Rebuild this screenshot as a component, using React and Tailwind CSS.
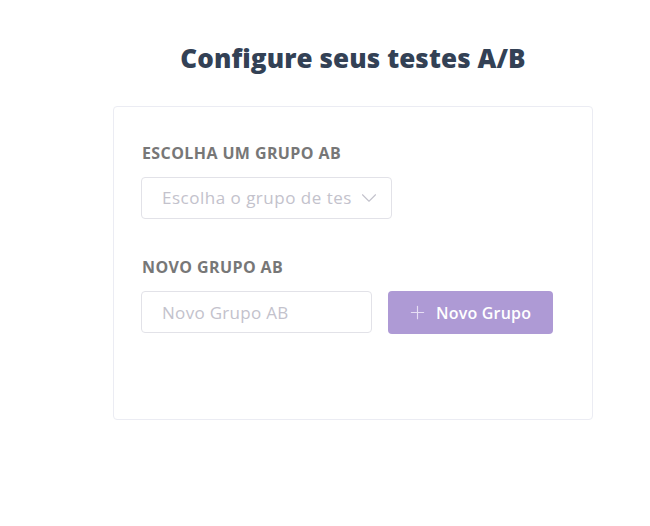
import {ChevronDown, Plus} from "lucide-react";

export default function App() {
    return (
        <div className="min-h-screen bg-white" style={{fontFamily: '"Open Sans", "Noto Sans", sans-serif'}}>
            <div className="ml-[113px] w-[480px] pt-[40px]">
                <h1 className="text-center text-[26px] leading-[36px] font-extrabold text-[#334155] tracking-[0.1px]">
                    Configure seus testes A/B
                </h1>
                <div className="mt-[30px] h-[314px] rounded border border-[#ebecf3] bg-white px-[27px] pt-[36px]">
                    <label className="block pl-[1px] text-[16px] leading-[20px] font-bold tracking-[0.4px] text-[#777777]">
                        ESCOLHA UM GRUPO AB
                    </label>
                    <div className="mt-[14px] flex h-[42px] w-[251px] items-center rounded border border-[#e2e2e8] pl-[20px] pr-[9px]">
                        <span className="min-w-0 flex-1 overflow-hidden whitespace-nowrap text-[17px] tracking-[0.5px] text-[#c3c2cc]">
                            Escolha o grupo de tes
                        </span>
                        <ChevronDown className="ml-[4px] h-[26px] w-[26px] shrink-0 text-[#c3c2cc]" strokeWidth={1}/>
                    </div>

                    <label className="mt-[38px] block pl-[1px] text-[16px] leading-[20px] font-bold tracking-[0.4px] text-[#777777]">
                        NOVO GRUPO AB
                    </label>
                    <div className="mt-[14px] flex items-start gap-[16px]">
                        <input
                            type="text"
                            placeholder="Novo Grupo AB"
                            className="h-[42px] w-[231px] rounded border border-[#e2e2e8] px-[20px] text-[17px] tracking-[0.3px] outline-none placeholder:text-[#c3c2cc]"
                        />
                        <button className="flex h-[43px] w-[165px] items-center gap-[8px] rounded bg-[#ae9ad5] pl-[19px] text-[16px] font-semibold tracking-[0.2px] text-white">
                            <Plus className="h-[21px] w-[21px] text-[#e6def4]" strokeWidth={1.3}/>
                            Novo Grupo
                        </button>
                    </div>
                </div>
            </div>
        </div>
    )
}
